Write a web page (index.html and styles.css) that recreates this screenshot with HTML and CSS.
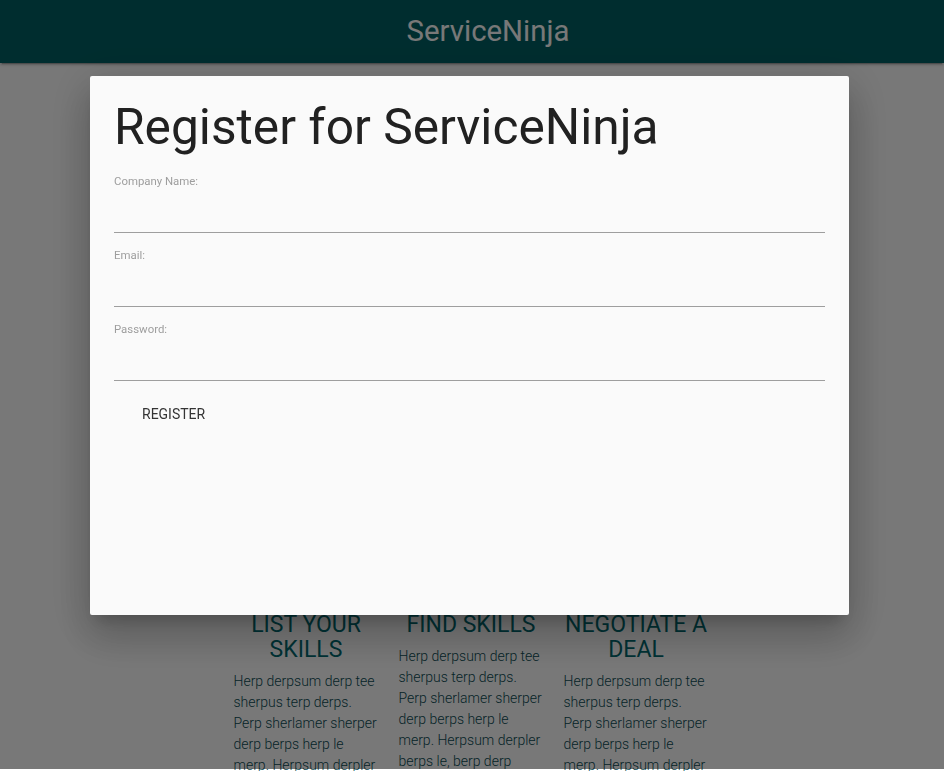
FILE: index.html
```html
<!DOCTYPE html>
<html lang="en">
<head>
<meta charset="utf-8">
<title>ServiceNinja</title>
<link rel="stylesheet" href="styles.css">
</head>
<body>
<header class="topbar">
  <div class="brand">ServiceNinja</div>
</header>
<main class="page">
  <section class="hero"></section>
  <section class="features">
    <div class="feature">
      <h5 class="feature-title">List your skills</h5>
      <p class="feature-text">Herp derpsum derp tee sherpus terp derps. Perp sherlamer sherper derp berps herp le merp. Herpsum derpler berps le, berp derp sherper herpy.</p>
    </div>
    <div class="feature">
      <h5 class="feature-title">Find skills</h5>
      <p class="feature-text">Herp derpsum derp tee sherpus terp derps. Perp sherlamer sherper derp berps herp le merp. Herpsum derpler berps le, berp derp sherper herpy.</p>
    </div>
    <div class="feature">
      <h5 class="feature-title">Negotiate a deal</h5>
      <p class="feature-text">Herp derpsum derp tee sherpus terp derps. Perp sherlamer sherper derp berps herp le merp. Herpsum derpler berps le, berp derp sherper herpy.</p>
    </div>
  </section>
</main>
<div class="overlay"></div>
<div class="modal">
  <div class="modal-content">
    <h2 class="modal-title">Register for ServiceNinja</h2>
    <form class="form">
      <div class="field">
        <label class="field-label">Company Name:</label>
        <input class="field-input" type="text">
      </div>
      <div class="field">
        <label class="field-label">Email:</label>
        <input class="field-input" type="email">
      </div>
      <div class="field">
        <label class="field-label">Password:</label>
        <input class="field-input" type="password">
      </div>
      <button class="btn-flat" type="button">Register</button>
    </form>
  </div>
</div>
</body>
</html>
```
FILE: styles.css
```css
html, body {
  margin: 0;
  padding: 0;
  height: 100%;
  overflow: hidden;
}
body {
  font-family: Roboto, "Liberation Sans", sans-serif;
  background: #ffffff;
  color: rgba(0,0,0,0.87);
}
.topbar {
  height: 63px;
  background: #006064;
  display: flex;
  align-items: center;
  justify-content: center;
  box-shadow: 0 2px 2px 0 rgba(0,0,0,.14), 0 1px 5px 0 rgba(0,0,0,.12), 0 3px 1px -2px rgba(0,0,0,.2);
}
.brand {
  color: #ffffff;
  font-size: 29.4px;
  padding-left: 32px;
  line-height: 63px;
}
.hero {
  height: 549px;
}
.features {
  display: flex;
  justify-content: center;
  padding-right: 2px;
}
.feature {
  width: 145px;
  padding: 0 10px;
}
.feature-title {
  margin: 0;
  font-size: 23px;
  line-height: 25px;
  font-weight: 400;
  text-transform: uppercase;
  text-align: center;
  color: #006a70;
}
.feature-text {
  margin: 9px 0 0;
  font-size: 14px;
  line-height: 21px;
  font-weight: 300;
  color: #0c4c54;
}
.overlay {
  position: fixed;
  left: 0;
  top: 0;
  right: 0;
  bottom: 2px;
  background: rgba(0,0,0,0.53);
}
.modal {
  position: fixed;
  left: 90px;
  top: 76px;
  width: 759px;
  height: 539px;
  background: #fafafa;
  border-radius: 2px;
  box-shadow: 0 24px 38px 3px rgba(0,0,0,.14), 0 9px 46px 8px rgba(0,0,0,.12), 0 11px 15px -7px rgba(0,0,0,.2);
}
.modal-content {
  padding: 24px 24px 24px;
}
.modal-title {
  margin: 0;
  font-size: 49.7px;
  line-height: 55px;
  font-weight: 400;
  color: #212121;
}
.form {
  margin-top: 19px;
}
.field {
  margin-bottom: 15px;
}
.field-label {
  display: block;
  font-size: 11.4px;
  line-height: 15px;
  color: #9e9e9e;
}
.field-input {
  display: block;
  width: 100%;
  box-sizing: content-box;
  height: 43px;
  padding: 0;
  margin: 0;
  border: none;
  border-bottom: 1px solid #9e9e9e;
  background: transparent;
  outline: none;
  font-family: inherit;
  font-size: 14.5px;
}
.btn-flat {
  display: block;
  height: 36px;
  line-height: 36px;
  padding: 0 28px;
  border: none;
  background: transparent;
  font-family: inherit;
  font-size: 14px;
  text-transform: uppercase;
  color: #343434;
  cursor: pointer;
}
```
